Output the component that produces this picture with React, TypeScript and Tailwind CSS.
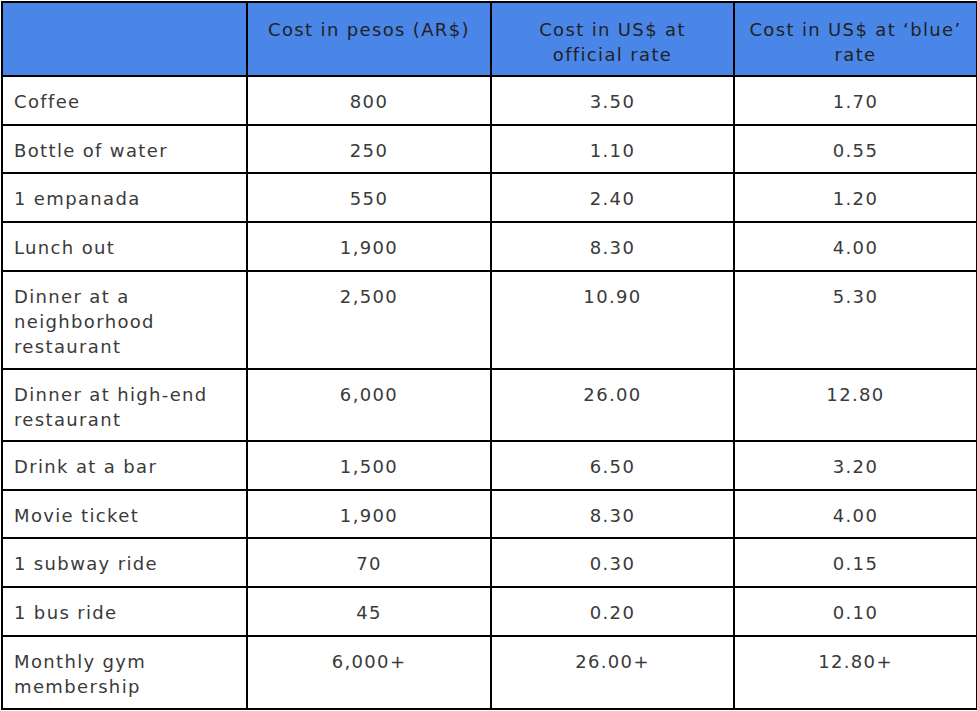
type Row = { label: string; ars: string; official: string; blue: string; pb: string };

const rows: Row[] = [
  { label: 'Coffee', ars: '800', official: '3.50', blue: '1.70', pb: 'pb-[10px]' },
  { label: 'Bottle of water', ars: '250', official: '1.10', blue: '0.55', pb: 'pb-[9px]' },
  { label: '1 empanada', ars: '550', official: '2.40', blue: '1.20', pb: 'pb-[10px]' },
  { label: 'Lunch out', ars: '1,900', official: '8.30', blue: '4.00', pb: 'pb-[10px]' },
  { label: 'Dinner at a neighborhood restaurant', ars: '2,500', official: '10.90', blue: '5.30', pb: 'pb-[9px]' },
  { label: 'Dinner at high-end restaurant', ars: '6,000', official: '26.00', blue: '12.80', pb: 'pb-[8px]' },
  { label: 'Drink at a bar', ars: '1,500', official: '6.50', blue: '3.20', pb: 'pb-[10px]' },
  { label: 'Movie ticket', ars: '1,900', official: '8.30', blue: '4.00', pb: 'pb-[9px]' },
  { label: '1 subway ride', ars: '70', official: '0.30', blue: '0.15', pb: 'pb-[10px]' },
  { label: '1 bus ride', ars: '45', official: '0.20', blue: '0.10', pb: 'pb-[10px]' },
  { label: 'Monthly gym membership', ars: '6,000+', official: '26.00+', blue: '12.80+', pb: 'pb-[9px]' },
];

const cell = 'border-2 border-black pt-[12px] align-top';
const head = 'border-2 border-black px-1 pt-[14px] pb-[8px] align-top font-normal text-center';

export default function App() {
  return (
    <div className="bg-white w-[977px] h-[711px] pt-px pl-px font-['DejaVu_Sans',sans-serif] text-[18px] leading-[25px] tracking-[0.075em] text-[#3a3a3a]">
      <table className="w-[975px] border-collapse table-fixed">
        <colgroup>
          <col className="w-[245px]" />
          <col className="w-[244px]" />
          <col className="w-[243px]" />
          <col className="w-[243px]" />
        </colgroup>
        <thead>
          <tr className="bg-[#4a86e8] text-[#222]">
            <th className={head}>
              <span className="invisible">&nbsp;</span>
            </th>
            <th className={head}>Cost in pesos (AR$)</th>
            <th className={`${head} px-4`}>Cost in US$ at official rate</th>
            <th className={head}>Cost in US$ at ‘blue’ rate</th>
          </tr>
        </thead>
        <tbody>
          {rows.map((r) => (
            <tr key={r.label}>
              <td className={`${cell} ${r.pb} pl-[11px] pr-3`}>{r.label}</td>
              <td className={`${cell} ${r.pb} px-3 text-center`}>{r.ars}</td>
              <td className={`${cell} ${r.pb} px-3 text-center`}>{r.official}</td>
              <td className={`${cell} ${r.pb} px-3 text-center`}>{r.blue}</td>
            </tr>
          ))}
        </tbody>
      </table>
    </div>
  );
}
